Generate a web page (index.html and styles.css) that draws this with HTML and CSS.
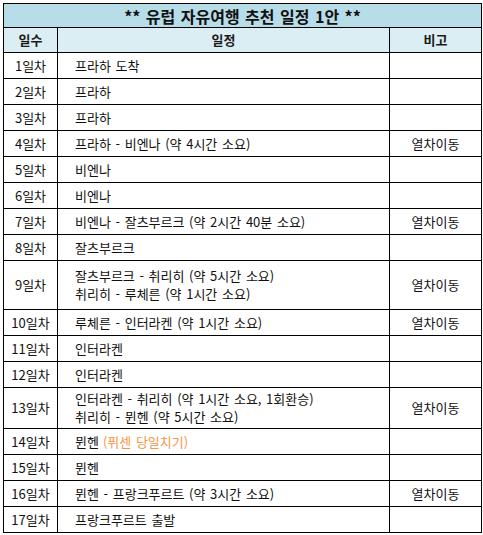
FILE: index.html
```html
<!DOCTYPE html>
<html lang="ko">
<head>
<meta charset="utf-8">
<title>유럽 자유여행 추천 일정 1안</title>
<link rel="stylesheet" href="styles.css">
</head>
<body>
<div class="sheet">
  <div class="title">** 유럽 자유여행 추천 일정 1안 **</div>

  <div class="head">일수</div>
  <div class="head">일정</div>
  <div class="head">비고</div>

  <div class="day">1일차</div><div class="plan">프라하 도착</div><div class="note"></div>
  <div class="day">2일차</div><div class="plan">프라하</div><div class="note"></div>
  <div class="day">3일차</div><div class="plan">프라하</div><div class="note"></div>
  <div class="day">4일차</div><div class="plan">프라하 - 비엔나 (약 4시간 소요)</div><div class="note">열차이동</div>
  <div class="day">5일차</div><div class="plan">비엔나</div><div class="note"></div>
  <div class="day">6일차</div><div class="plan">비엔나</div><div class="note"></div>
  <div class="day">7일차</div><div class="plan">비엔나 - 잘츠부르크 (약 2시간 40분 소요)</div><div class="note">열차이동</div>
  <div class="day">8일차</div><div class="plan">잘츠부르크</div><div class="note"></div>
  <div class="day tall-a">9일차</div><div class="plan tall-a">잘츠부르크 - 취리히 (약 5시간 소요)<br>취리히 - 루체른 (약 1시간 소요)</div><div class="note tall-a">열차이동</div>
  <div class="day">10일차</div><div class="plan">루체른 - 인터라켄 (약 1시간 소요)</div><div class="note">열차이동</div>
  <div class="day">11일차</div><div class="plan">인터라켄</div><div class="note"></div>
  <div class="day">12일차</div><div class="plan">인터라켄</div><div class="note"></div>
  <div class="day tall-b">13일차</div><div class="plan tall-b">인터라켄 - 취리히 (약 1시간 소요, 1회환승)<br>취리히 - 뮌헨 (약 5시간 소요)</div><div class="note tall-b">열차이동</div>
  <div class="day">14일차</div><div class="plan">뮌헨 <span class="side">(퓌센 당일치기)</span></div><div class="note"></div>
  <div class="day">15일차</div><div class="plan">뮌헨</div><div class="note"></div>
  <div class="day">16일차</div><div class="plan">뮌헨 - 프랑크푸르트 (약 3시간 소요)</div><div class="note">열차이동</div>
  <div class="day">17일차</div><div class="plan">프랑크푸르트 출발</div><div class="note"></div>
</div>
</body>
</html>
```

FILE: styles.css
```css
html, body {
  margin: 0;
  padding: 0;
  background: #ffffff;
}

body {
  padding: 3px;
  font-family: "Noto Sans CJK KR", "Noto Sans", sans-serif;
  font-size: 13px;
  color: #111111;
}

.sheet {
  display: grid;
  grid-template-columns: 53px 331px 91px;
  gap: 1px;
  padding: 1px;
  background: #000000;
  width: 477px;
}

.sheet > div {
  background: #ffffff;
  display: flex;
  align-items: center;
  height: 25px;
  line-height: 18px;
  white-space: nowrap;
  word-spacing: 1px;
}

.sheet > .title {
  grid-column: 1 / -1;
  height: 23px;
  justify-content: center;
  background: #b7dde8;
  font-size: 16px;
  font-weight: bold;
  color: #111111;
}

.sheet > .head {
  height: 24px;
  justify-content: center;
  background: #daeef3;
  font-weight: bold;
  color: #1a1a1a;
}

.sheet > .day,
.sheet > .note {
  justify-content: center;
}

.sheet > .plan {
  padding-left: 17px;
}

.sheet > .tall-a {
  height: 48px;
}

.sheet > .tall-b {
  height: 40px;
}

.side {
  color: #f79646;
  margin-left: 4px;
}
```
